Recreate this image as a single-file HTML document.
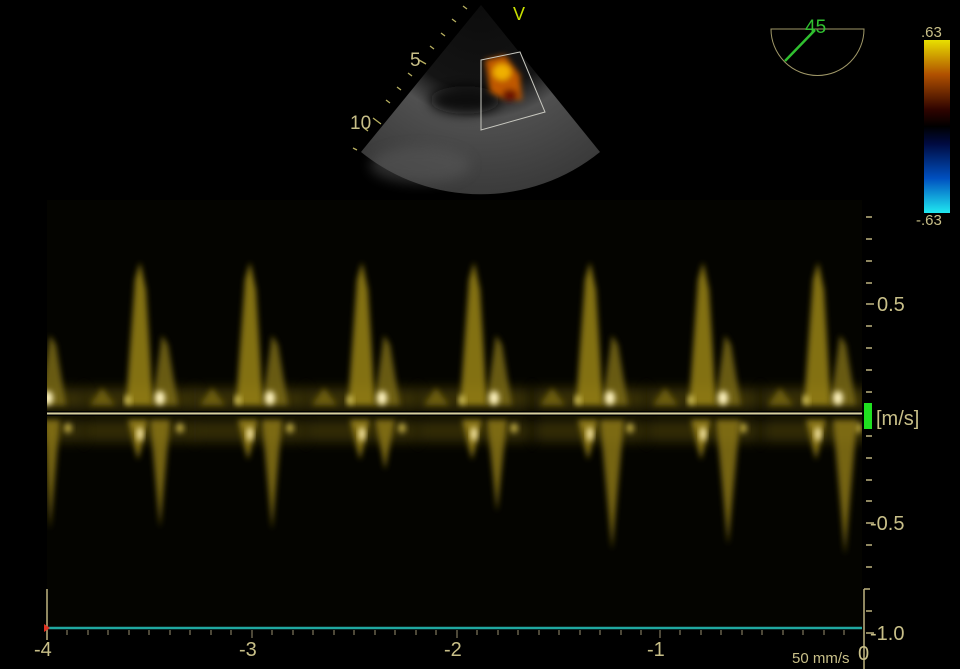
<!DOCTYPE html>
<html><head><meta charset="utf-8"><style>
html,body{margin:0;padding:0;background:#000;width:960px;height:669px;overflow:hidden}
svg{display:block}
text{font-family:"Liberation Sans",sans-serif}
</style></head><body>
<svg width="960" height="669" viewBox="0 0 960 669" xmlns="http://www.w3.org/2000/svg">
<defs>
<filter id="b" x="-50%" y="-50%" width="200%" height="200%"><feGaussianBlur stdDeviation="3"/></filter>
<filter id="b2" x="-50%" y="-50%" width="200%" height="200%"><feGaussianBlur stdDeviation="6"/></filter>
<radialGradient id="sec" cx="481" cy="5" r="190" gradientUnits="userSpaceOnUse">
<stop offset="0" stop-color="#0c0c0c"/><stop offset="0.45" stop-color="#141414"/><stop offset="0.6" stop-color="#505050"/><stop offset="1" stop-color="#3a3a3a"/></radialGradient>
<linearGradient id="cb" x1="0" y1="0" x2="0" y2="1">
<stop offset="0" stop-color="#e8e000"/><stop offset="0.2" stop-color="#b05000"/><stop offset="0.4" stop-color="#300400"/><stop offset="0.5" stop-color="#000"/><stop offset="0.6" stop-color="#000a40"/><stop offset="0.8" stop-color="#0050c0"/><stop offset="1" stop-color="#20e8f0"/></linearGradient>
<g id="cyc">
<rect x="-56" y="388" width="112" height="22" fill="#6a5c0a" opacity="0.5" filter="url(#b2)"/>
<polygon points="-14,405 -5,280 0,262 6,290 13,405" fill="#9a8416" opacity="0.85" filter="url(#b)"/>
<polygon points="12,405 22,335 28,345 38,405" fill="#7a6a12" opacity="0.85" filter="url(#b)"/>
<polygon points="-50,405 -38,388 -25,405" fill="#6a5c0a" filter="url(#b)"/>
<ellipse cx="20" cy="398" rx="5" ry="7" fill="#fff4c0" filter="url(#b)"/>
<ellipse cx="-12" cy="400" rx="3" ry="5" fill="#d8c860" filter="url(#b)"/>
<rect x="-56" y="420" width="112" height="22" fill="#6a5c0a" opacity="0.45" filter="url(#b2)"/>
<polygon points="-12,420 -2,460 8,420" fill="#8a7614" filter="url(#b)"/>
<ellipse cx="0" cy="434" rx="3" ry="7" fill="#fff0b0" filter="url(#b)"/>
<ellipse cx="40" cy="428" rx="4" ry="5" fill="#b8a440" filter="url(#b)"/>
</g>
<clipPath id="sp"><rect x="47" y="200" width="815" height="428"/></clipPath>
</defs>
<rect x="47" y="200" width="815" height="428" fill="#040400"/>
<g clip-path="url(#sp)">
<use href="#cyc" x="140"/>
<use href="#cyc" x="250"/>
<use href="#cyc" x="362"/>
<use href="#cyc" x="474"/>
<use href="#cyc" x="590"/>
<use href="#cyc" x="703"/>
<use href="#cyc" x="818"/>
<use href="#cyc" x="28"/>
<g fill="#8a7614" opacity="0.85" filter="url(#b)">
<polygon points="44,420 50,530 60,420"/>
<polygon points="150,420 160,528 170,420"/>
<polygon points="262,420 272,530 282,420"/>
<polygon points="375,420 385,470 395,420"/>
<polygon points="487,420 497,512 507,420"/>
<polygon points="600,420 612,550 624,420"/>
<polygon points="716,420 728,545 740,420"/>
<polygon points="833,420 845,555 857,420"/>
</g>
</g>
<rect x="47" y="411" width="815" height="5" fill="#000"/>
<line x1="47" y1="413.5" x2="862" y2="413.5" stroke="#d8d0a0" stroke-width="2"/>
<g stroke="#bfb480" stroke-width="1.5">
<line x1="866" y1="217" x2="872" y2="217"/><line x1="866" y1="239" x2="872" y2="239"/><line x1="866" y1="261" x2="872" y2="261"/><line x1="866" y1="283" x2="872" y2="283"/><line x1="866" y1="304" x2="874" y2="304"/><line x1="866" y1="326" x2="872" y2="326"/><line x1="866" y1="348" x2="872" y2="348"/><line x1="866" y1="370" x2="872" y2="370"/><line x1="866" y1="392" x2="872" y2="392"/><line x1="866" y1="436" x2="872" y2="436"/><line x1="866" y1="458" x2="872" y2="458"/><line x1="866" y1="480" x2="872" y2="480"/><line x1="866" y1="501" x2="872" y2="501"/><line x1="866" y1="523" x2="874" y2="523"/><line x1="866" y1="545" x2="872" y2="545"/><line x1="866" y1="567" x2="872" y2="567"/><line x1="866" y1="611" x2="872" y2="611"/><line x1="866" y1="633" x2="874" y2="633"/>
<line x1="864" y1="589" x2="864" y2="669"/><line x1="864" y1="589" x2="870" y2="589"/>
<line x1="47" y1="589" x2="47" y2="640"/>
</g>
<rect x="864" y="403" width="8" height="26" fill="#20e020"/>
<g fill="#c8bf88" font-size="20">
<text x="877" y="311">0.5</text>
<text x="876" y="425">[m/s]</text>
<text x="870" y="530">-0.5</text>
<text x="870" y="640">-1.0</text>
<text x="34" y="656">-4</text><text x="239" y="656">-3</text><text x="444" y="656">-2</text><text x="647" y="656">-1</text><text x="858" y="660">0</text>
<text x="792" y="663" font-size="15">50 mm/s</text>
</g>
<line x1="47" y1="628" x2="862" y2="628" stroke="#20a8a0" stroke-width="2.5"/>
<g stroke="#9a9070" stroke-width="1">
<line x1="67" y1="630" x2="67" y2="635"/><line x1="88" y1="630" x2="88" y2="635"/><line x1="108" y1="630" x2="108" y2="635"/><line x1="129" y1="630" x2="129" y2="635"/><line x1="149" y1="630" x2="149" y2="635"/><line x1="170" y1="630" x2="170" y2="635"/><line x1="190" y1="630" x2="190" y2="635"/><line x1="211" y1="630" x2="211" y2="635"/><line x1="231" y1="630" x2="231" y2="635"/><line x1="252" y1="630" x2="252" y2="638"/><line x1="272" y1="630" x2="272" y2="635"/><line x1="293" y1="630" x2="293" y2="635"/><line x1="313" y1="630" x2="313" y2="635"/><line x1="334" y1="630" x2="334" y2="635"/><line x1="354" y1="630" x2="354" y2="635"/><line x1="375" y1="630" x2="375" y2="635"/><line x1="395" y1="630" x2="395" y2="635"/><line x1="416" y1="630" x2="416" y2="635"/><line x1="436" y1="630" x2="436" y2="635"/><line x1="457" y1="630" x2="457" y2="638"/><line x1="477" y1="630" x2="477" y2="635"/><line x1="498" y1="630" x2="498" y2="635"/><line x1="518" y1="630" x2="518" y2="635"/><line x1="539" y1="630" x2="539" y2="635"/><line x1="559" y1="630" x2="559" y2="635"/><line x1="580" y1="630" x2="580" y2="635"/><line x1="600" y1="630" x2="600" y2="635"/><line x1="621" y1="630" x2="621" y2="635"/><line x1="641" y1="630" x2="641" y2="635"/><line x1="660" y1="630" x2="660" y2="638"/><line x1="680" y1="630" x2="680" y2="635"/><line x1="701" y1="630" x2="701" y2="635"/><line x1="721" y1="630" x2="721" y2="635"/><line x1="742" y1="630" x2="742" y2="635"/><line x1="762" y1="630" x2="762" y2="635"/><line x1="783" y1="630" x2="783" y2="635"/><line x1="803" y1="630" x2="803" y2="635"/><line x1="824" y1="630" x2="824" y2="635"/><line x1="844" y1="630" x2="844" y2="635"/>
</g>
<polygon points="44,624 50,628 44,632" fill="#e03020"/>
<path d="M481,5 L361,152 A190,190 0 0 0 600,152 Z" fill="url(#sec)"/>
<ellipse cx="465" cy="100" rx="35" ry="14" fill="#0a0a0a" filter="url(#b2)"/>
<ellipse cx="420" cy="165" rx="50" ry="18" fill="#5a5a5a" opacity="0.5" filter="url(#b2)"/>
<g filter="url(#b)">
<path d="M485,60 L505,55 L520,75 L522,100 L505,100 L490,92 Z" fill="#c05800"/>
<ellipse cx="502" cy="72" rx="9" ry="8" fill="#f0b000"/>
<ellipse cx="510" cy="95" rx="8" ry="6" fill="#701800"/>
</g>
<path d="M481,60 L520,52 L545,112 L481,130 Z" fill="none" stroke="#c8c8c0" stroke-width="1"/>
<g stroke="#b8b060" stroke-width="1.3">
<line x1="463" y1="6" x2="467" y2="9"/><line x1="452" y1="19" x2="456" y2="22"/><line x1="441" y1="33" x2="445" y2="36"/><line x1="430" y1="46" x2="434" y2="49"/><line x1="419" y1="60" x2="426" y2="64"/><line x1="408" y1="73" x2="412" y2="76"/><line x1="397" y1="87" x2="401" y2="90"/><line x1="386" y1="100" x2="390" y2="103"/><line x1="373" y1="118" x2="381" y2="124"/><line x1="364" y1="128" x2="368" y2="131"/><line x1="353" y1="148" x2="357" y2="150"/>
</g>
<g fill="#c8bf88" font-size="19"><text x="410" y="66">5</text><text x="350" y="129">10</text></g>
<text x="513" y="20" fill="#c8e000" font-size="18">V</text>
<path d="M771,29 L864,29 A46.5,46.5 0 0 1 771,29 Z" fill="none" stroke="#a09868" stroke-width="1"/>
<line x1="785" y1="61" x2="815" y2="30" stroke="#30c030" stroke-width="2.5"/>
<text x="805" y="33" fill="#30c030" font-size="19">45</text>
<rect x="924" y="40" width="26" height="173" fill="url(#cb)"/>
<text x="921" y="37" fill="#c8bf88" font-size="15">.63</text>
<text x="916" y="225" fill="#c8bf88" font-size="15">-.63</text>
</svg>
</body></html>
